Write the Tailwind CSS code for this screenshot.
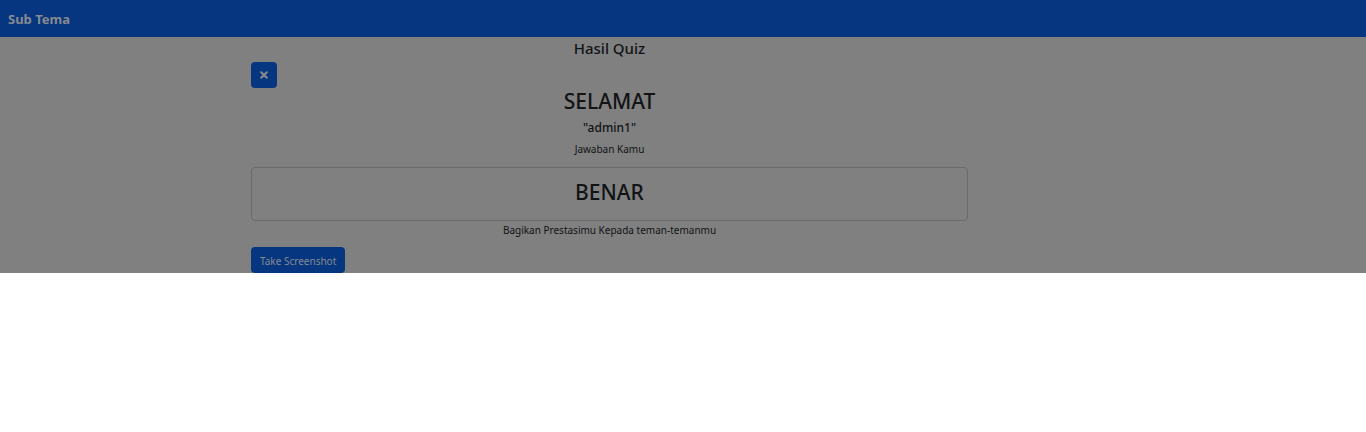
<!DOCTYPE html>
<html lang="id">
<head>
<meta charset="utf-8">
<meta name="viewport" content="width=device-width, initial-scale=1">
<title>Hasil Quiz</title>
<script src="https://cdn.jsdelivr.net/npm/@tailwindcss/browser@4"></script>
</head>
<body class="bg-white font-['Noto_Sans',sans-serif] text-[#111315]">
<div class="bg-[#808080]">
  <header class="flex h-[37px] items-center bg-[#06367f] px-2 pt-0.5">
    <a href="#" class="text-[13px] font-bold text-[#868a90]">Sub Tema</a>
  </header>
  <main class="ml-[251px] mr-[398px] flex flex-col items-start text-center">
    <h1 class="mb-[3px] w-full text-[15px] leading-[22px] font-medium">Hasil Quiz</h1>
    <button type="button" aria-label="Tutup" class="flex size-[26px] items-center justify-center rounded bg-[#06367f] text-[#868a90]">
      <svg class="size-2" viewBox="0 0 8 8" fill="none" stroke="currentColor" stroke-width="2" stroke-linecap="round"><path d="M1.2 1.2 6.8 6.8M6.8 1.2 1.2 6.8"/></svg>
    </button>
    <h2 class="w-full text-[21px] leading-[26px] font-medium">SELAMAT</h2>
    <h3 class="w-full text-[12px] leading-[28px] font-medium">"admin1"</h3>
    <p class="mb-[11px] w-full text-[10px] leading-[14px]">Jawaban Kamu</p>
    <div class="w-full rounded border border-[#6b6b6b] pt-[11px] pb-[15px]">
      <h2 class="text-[21px] leading-[26px] font-medium">BENAR</h2>
    </div>
    <p class="mb-2 w-full text-[10px] leading-[18px]">Bagikan Prestasimu Kepada teman-temanmu</p>
    <button type="button" class="h-[26px] rounded bg-[#06367f] px-[9px] pt-0.5 text-[10px] text-[#868a90]">Take Screenshot</button>
  </main>
</div>
</body>
</html>
